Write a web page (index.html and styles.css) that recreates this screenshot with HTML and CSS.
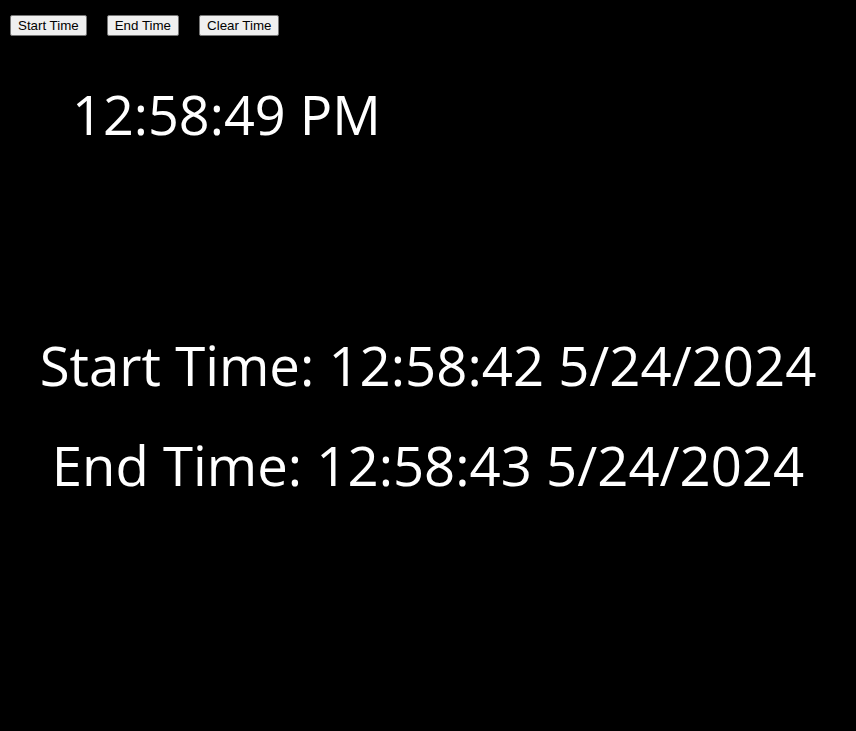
FILE: index.html
```html
<!DOCTYPE html>
<html>
<head>
<meta charset="utf-8">
<link rel="stylesheet" href="styles.css">
</head>
<body>
<div class="toolbar">
  <button class="btn">Start Time</button>
  <button class="btn">End Time</button>
  <button class="btn">Clear Time</button>
</div>
<div class="clock">12:58:49 PM</div>
<div class="times">
  <div class="line">Start Time: 12:58:42 5/24/2024</div>
  <div class="line">End Time: 12:58:43 5/24/2024</div>
</div>
</body>
</html>
```
FILE: styles.css
```css
html, body {
  margin: 0;
  padding: 0;
  background: #000;
  height: 100%;
}
body {
  color: #fff;
  font-family: "Open Sans", sans-serif;
}
.toolbar {
  display: flex;
  gap: 20px;
  padding: 15px 10px 0;
}
.btn {
  font-family: "Liberation Sans", Arial, sans-serif;
  font-size: 13.33px;
  height: 21px;
  padding: 0 7px;
  background: #efefef;
  color: #000;
  border: 1px solid #767676;
  border-radius: 2px;
  line-height: 19px;
}
.clock {
  font-size: 54px;
  line-height: 1;
  margin: 51px 0 0 72px;
}
.times {
  margin-top: 190px;
  display: flex;
  flex-direction: column;
  align-items: center;
  gap: 32px;
}
.line {
  font-size: 54.5px;
  line-height: 68px;
}
```
